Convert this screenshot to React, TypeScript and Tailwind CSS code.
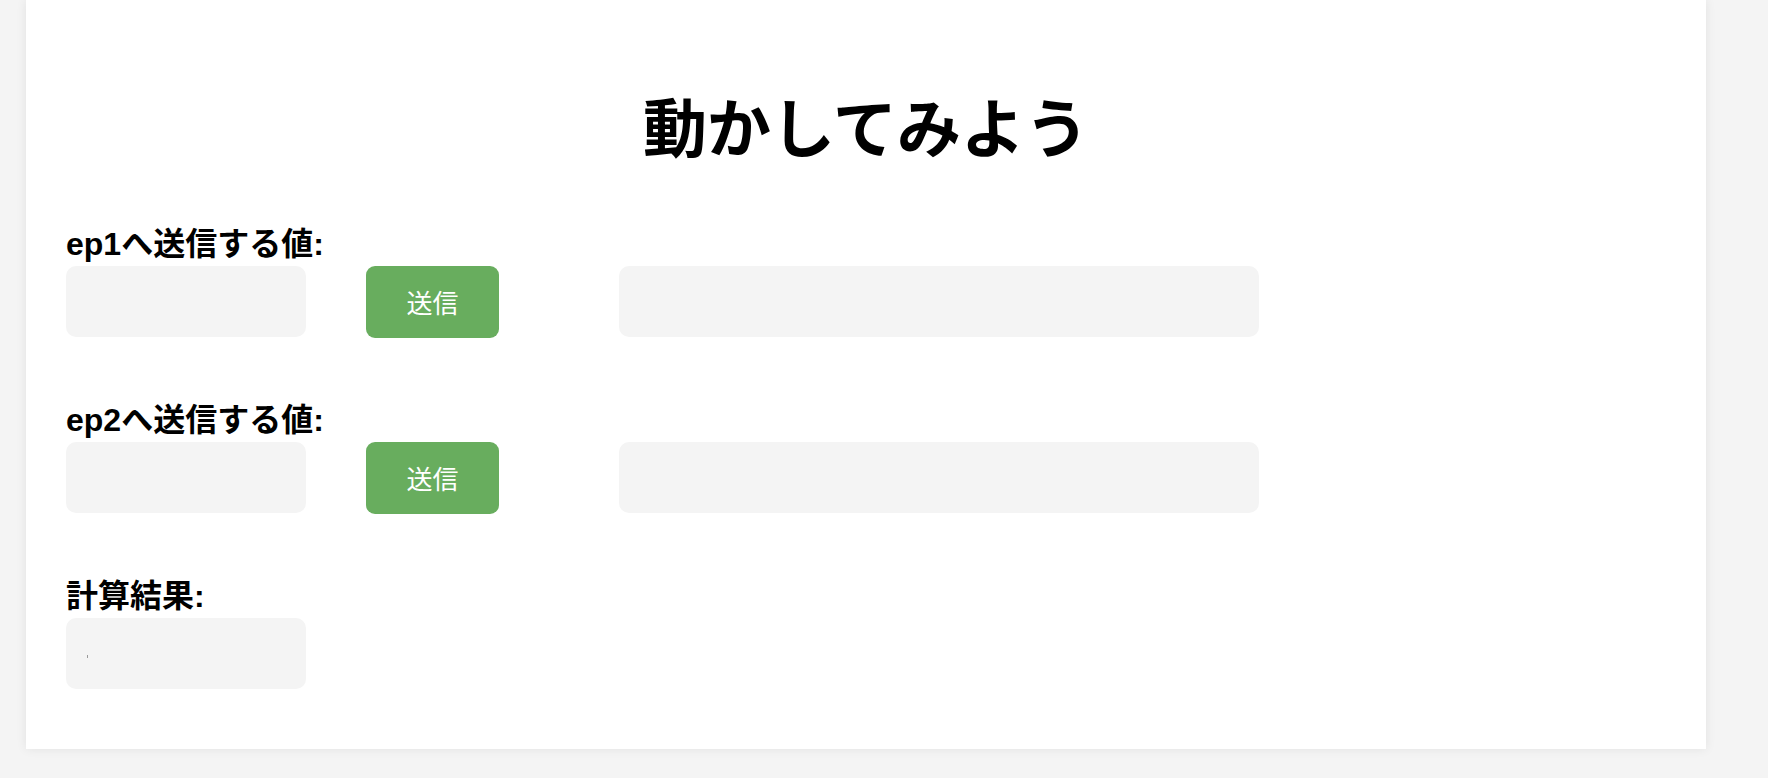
import React from "react";

const labelFont = {
  fontFamily: '"Liberation Sans", "Noto Sans CJK JP", sans-serif',
};

function Label({ text }: { text: string }) {
  return (
    <div
      className="h-[36px] text-[32px] leading-[36px] font-bold text-black whitespace-nowrap"
      style={labelFont}
    >
      {text}
    </div>
  );
}

function SendRow({ label, first }: { label: string; first?: boolean }) {
  return (
    <div className={first ? "" : "mt-[64px]"}>
      <Label text={label} />
      <div className="mt-[4px] flex items-start">
        <div className="w-[240px] h-[71px] rounded-[10px] bg-[#f4f4f4]" />
        <button
          className="ml-[60px] w-[133px] h-[72px] rounded-[9px] bg-[#68ad5e] text-white text-[26px] leading-none flex items-center justify-center"
          style={{ fontFamily: '"Noto Sans CJK JP", sans-serif' }}
        >
          送信
        </button>
        <div className="ml-[120px] w-[640px] h-[71px] rounded-[10px] bg-[#f4f4f4]" />
      </div>
    </div>
  );
}

export default function App() {
  return (
    <div className="min-h-[778px] w-full bg-[#f4f4f4] overflow-hidden">
      <div className="ml-[26px] w-[1680px] bg-white shadow-[0_0_10px_rgba(0,0,0,0.08)] px-[40px] pt-[92px] pb-[60px]">
        <h1
          className="h-[64px] text-center text-[64px] leading-[64px] font-bold text-black mb-[70px]"
          style={{ fontFamily: '"Noto Sans CJK JP", sans-serif' }}
        >
          動かしてみよう
        </h1>
        <SendRow label="ep1へ送信する値:" first />
        <SendRow label="ep2へ送信する値:" />
        <div className="mt-[64px]">
          <Label text="計算結果:" />
          <div className="mt-[4px] w-[240px] h-[71px] rounded-[10px] bg-[#f4f4f4] pl-[21px] pt-[37px]">
            <div className="w-[1px] h-[3px] bg-[#9a9a9a]" />
          </div>
        </div>
      </div>
    </div>
  );
}
